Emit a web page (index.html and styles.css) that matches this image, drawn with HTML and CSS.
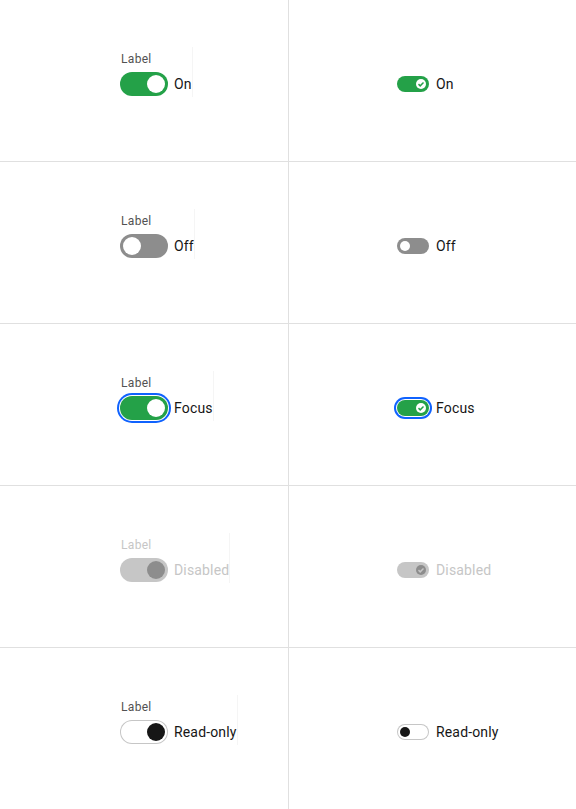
FILE: index.html
```html
<!DOCTYPE html>
<html lang="en">
<head>
<meta charset="utf-8">
<title>Toggle</title>
<link rel="stylesheet" href="styles.css">
</head>
<body>
<div class="grid">
  <div class="cell left">
    <div class="field">
      <span class="label">Label</span>
      <div class="row">
        <span class="track on"><span class="knob"></span></span>
        <span class="text">On</span>
      </div>
    </div>
  </div>
  <div class="cell right">
    <div class="row">
      <span class="track sm on"><span class="knob"><svg class="check" viewBox="0 0 6 5"><path d="M2.2 2.7L5 0 6 1 2.2 5 0 2.7 1 1.5z"/></svg></span></span>
      <span class="text">On</span>
    </div>
  </div>

  <div class="cell left">
    <div class="field">
      <span class="label">Label</span>
      <div class="row">
        <span class="track off"><span class="knob"></span></span>
        <span class="text">Off</span>
      </div>
    </div>
  </div>
  <div class="cell right">
    <div class="row">
      <span class="track sm off"><span class="knob"></span></span>
      <span class="text">Off</span>
    </div>
  </div>

  <div class="cell left">
    <div class="field">
      <span class="label">Label</span>
      <div class="row">
        <span class="track on focus"><span class="knob"></span></span>
        <span class="text">Focus</span>
      </div>
    </div>
  </div>
  <div class="cell right">
    <div class="row">
      <span class="track sm on focus"><span class="knob"><svg class="check" viewBox="0 0 6 5"><path d="M2.2 2.7L5 0 6 1 2.2 5 0 2.7 1 1.5z"/></svg></span></span>
      <span class="text">Focus</span>
    </div>
  </div>

  <div class="cell left">
    <div class="field">
      <span class="label disabled">Label</span>
      <div class="row">
        <span class="track on dis"><span class="knob"></span></span>
        <span class="text disabled">Disabled</span>
      </div>
    </div>
  </div>
  <div class="cell right">
    <div class="row">
      <span class="track sm on dis"><span class="knob"><svg class="check" viewBox="0 0 6 5"><path d="M2.2 2.7L5 0 6 1 2.2 5 0 2.7 1 1.5z"/></svg></span></span>
      <span class="text disabled">Disabled</span>
    </div>
  </div>

  <div class="cell left last">
    <div class="field">
      <span class="label">Label</span>
      <div class="row">
        <span class="track on ro"><span class="knob"></span></span>
        <span class="text">Read-only</span>
      </div>
    </div>
  </div>
  <div class="cell right last">
    <div class="row">
      <span class="track sm off ro"><span class="knob"></span></span>
      <span class="text">Read-only</span>
    </div>
  </div>
</div>
</body>
</html>
```
FILE: styles.css
```css
html, body {
  margin: 0;
  padding: 0;
  background: #ffffff;
}

body {
  font-family: Roboto, "Noto Sans", sans-serif;
  color: #161616;
}

.grid {
  display: grid;
  grid-template-columns: 288px 288px;
  grid-template-rows: 162px 162px 162px 162px 161px;
  width: 576px;
  height: 809px;
}

.cell {
  box-sizing: border-box;
  border-bottom: 1px solid #e0e0e0;
}

.cell.last {
  border-bottom: none;
}

.cell.left {
  padding: 47px 0 0 120px;
}

.cell.right {
  border-left: 1px solid #e0e0e0;
  padding: 74px 0 0 108px;
}

.field {
  display: inline-flex;
  flex-direction: column;
  align-items: flex-start;
  padding: 4px 0 1px 0;
  border-right: 1px solid #f5f5f5;
}

.label {
  font-size: 12px;
  line-height: 16px;
  color: #525252;
  margin: 0 0 5px 1px;
  letter-spacing: 0.32px;
}

.row {
  display: flex;
  align-items: center;
  gap: 6px;
  height: 24px;
}

.cell.right .row {
  height: 20px;
  gap: 7px;
}

.text {
  font-size: 14px;
  line-height: 20px;
  color: #161616;
  letter-spacing: 0.16px;
}

.disabled {
  color: #c6c6c6;
}

.track {
  position: relative;
  display: block;
  flex: none;
  width: 48px;
  height: 24px;
  border-radius: 12px;
  box-sizing: border-box;
}

.track.on { background: #24a148; }
.track.off { background: #8d8d8d; }
.track.dis { background: #c6c6c6; }
.track.ro { background: #ffffff; box-shadow: inset 0 0 0 1px #c6c6c6; }
.track.focus { box-shadow: 0 0 0 1px #ffffff, 0 0 0 3px #0f62fe; }

.knob {
  position: absolute;
  top: 3px;
  left: 3px;
  width: 18px;
  height: 18px;
  border-radius: 50%;
  background: #ffffff;
}

.track.on .knob { left: 27px; }
.track.dis .knob { background: #8d8d8d; }
.track.ro .knob { background: #161616; }

.track.sm {
  width: 32px;
  height: 16px;
  border-radius: 8px;
}

.track.sm .knob {
  width: 10px;
  height: 10px;
  top: 3px;
  left: 3px;
}

.track.sm.on .knob { left: 19px; }

.check {
  position: absolute;
  left: 2px;
  top: 2.5px;
  width: 6px;
  height: 5px;
  fill: #24a148;
  display: block;
}

.track.dis .check { fill: #c6c6c6; }
```
